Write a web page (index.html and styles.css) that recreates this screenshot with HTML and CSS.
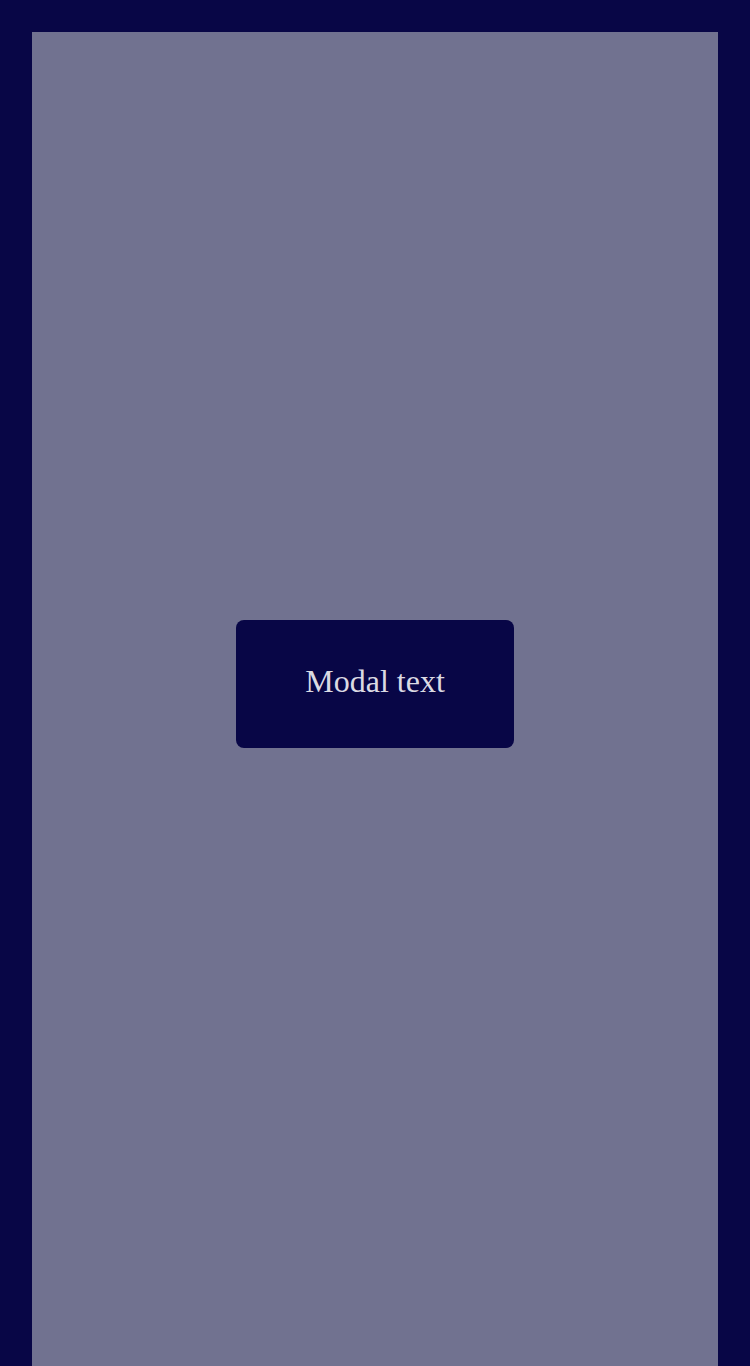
FILE: index.html
```html
<!DOCTYPE html>
<html>
<head>
<meta charset="utf-8">
<link rel="stylesheet" href="styles.css">
</head>
<body>
<div class="backdrop"></div>
<div class="modal-layer">
  <div class="modal">Modal text</div>
</div>
</body>
</html>
```
FILE: styles.css
```css
html, body {
  margin: 0;
  padding: 0;
  height: 100%;
}
body {
  background: #080646;
  font-family: "Liberation Serif", "Times New Roman", serif;
}
.backdrop {
  position: fixed;
  top: 32px;
  left: 32px;
  right: 32px;
  bottom: 0;
  background: #717290;
}
.modal-layer {
  position: fixed;
  inset: 0;
  display: flex;
  align-items: center;
  justify-content: center;
}
.modal {
  width: 278px;
  height: 128px;
  margin-top: 2px;
  box-sizing: border-box;
  display: flex;
  align-items: center;
  justify-content: center;
  padding-bottom: 6px;
  background: #080646;
  border-radius: 8px;
  color: #dbdae3;
  font-size: 32px;
  line-height: 37px;
}
```
